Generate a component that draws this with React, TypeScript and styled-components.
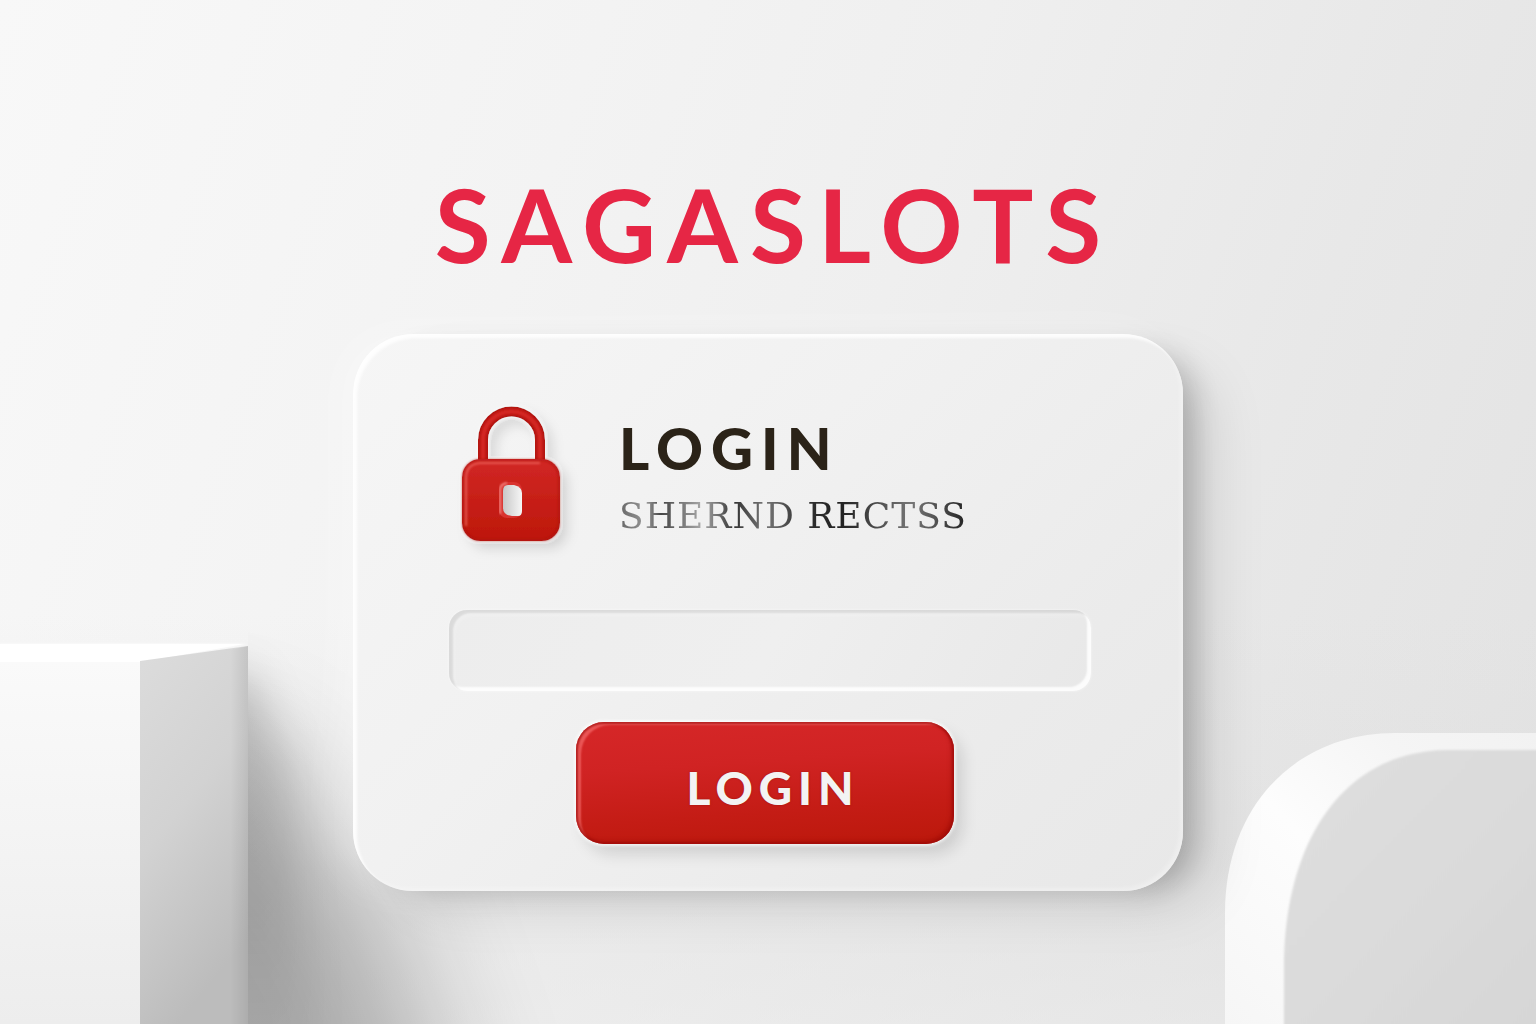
import React from "react";
import styled, { createGlobalStyle } from "styled-components";

const GlobalStyle = createGlobalStyle`
  *, *::before, *::after { box-sizing: border-box; }
  body { margin: 0; font-family: Lato, "Liberation Sans", sans-serif; }
`;

const Page = styled.div`
  position: relative;
  z-index: 0;
  min-height: 100vh;
  overflow: hidden;
  display: flex;
  flex-direction: column;
  align-items: center;
  padding: 168px 24px 132px;
  background:
    linear-gradient(180deg, rgba(255, 255, 255, 0) 60%, rgba(220, 220, 220, 0.35) 85%, rgba(232, 232, 232, 0.5) 100%),
    linear-gradient(110deg, #f8f8f8 0%, #f3f3f3 32%, #efefef 52%, #e8e8e8 75%, #e2e2e2 100%);
`;

const LeftBlock = styled.svg`
  position: absolute;
  z-index: -1;
  left: 0;
  bottom: 0;
`;

const RightBlock = styled.svg`
  position: absolute;
  z-index: -1;
  right: 0;
  bottom: 0;
`;

const Brand = styled.h1`
  margin: 0 0 54px;
  padding-left: 12px;
  font-size: 102px;
  line-height: 112px;
  font-weight: 700;
  letter-spacing: 12px;
  color: #e62645;
`;

const Card = styled.form`
  display: flex;
  flex-direction: column;
  width: 100%;
  max-width: 830px;
  padding: 72px 92px 47px 96px;
  border-radius: 60px;
  background: linear-gradient(135deg, #f6f6f6 0%, #f1f1f1 40%, #ebebeb 75%, #e8e8e8 100%);
  box-shadow:
    inset 4px 4px 3px rgba(255, 255, 255, 0.85),
    inset -3px -3px 4px rgba(255, 255, 255, 0.3),
    -14px -4px 40px rgba(255, 255, 255, 0.3),
    18px 8px 28px -10px rgba(0, 0, 0, 0.24),
    40px 24px 60px -16px rgba(0, 0, 0, 0.13);
`;

const Header = styled.header`
  display: flex;
  align-items: flex-start;
  gap: 60px;
  padding: 0 12px;
`;

const LockIcon = styled.svg`
  flex: none;
  overflow: visible;
`;

const Heading = styled.div`
  display: flex;
  flex-direction: column;
  gap: 14px;
  padding-top: 10px;
`;

const Title = styled.h2`
  margin: 0;
  font-size: 58px;
  line-height: 64px;
  font-weight: 900;
  letter-spacing: 8px;
  color: #2b2318;
`;

const Caption = styled.label`
  font-family: "DejaVu Serif", "Liberation Serif", serif;
  font-size: 36px;
  line-height: 44px;
  letter-spacing: 1px;
  color: transparent;
  background: linear-gradient(90deg, #666 0%, #999 8%, #444 12%, #aaa 24%, #333 33%, #777 42%, #333 52%, #222 64%, #444 72%, #777 84%, #222 100%);
  -webkit-background-clip: text;
  background-clip: text;
`;

const Field = styled.input`
  width: 100%;
  height: 81px;
  margin: 68px 0 31px;
  padding: 0 28px;
  border: 0;
  border-radius: 18px;
  outline: none;
  font: 400 28px/36px Lato, "Liberation Sans", sans-serif;
  color: #2b2318;
  background: linear-gradient(120deg, #ededed, #efefef 50%, #e8e8e8);
  box-shadow:
    inset 4px 3px 2px rgba(0, 0, 0, 0.09),
    inset 6px 6px 4px rgba(255, 255, 255, 0.2),
    inset -4px -4px 2px rgba(255, 255, 255, 0.85),
    0 0 3px rgba(255, 255, 255, 0.6);
`;

const Actions = styled.div`
  display: flex;
  justify-content: center;
  padding-right: 10px;
`;

const Submit = styled.button`
  width: 378px;
  max-width: 100%;
  height: 122px;
  padding: 9px 0 0 16px;
  border: 0;
  border-radius: 28px;
  font-family: inherit;
  font-size: 46px;
  line-height: 56px;
  font-weight: 900;
  letter-spacing: 6px;
  color: #f3f3f3;
  text-shadow: 0 0 2px rgba(110, 0, 0, 0.5);
  cursor: pointer;
  background: linear-gradient(176deg, #d62728 0%, #d02323 35%, #c41c15 70%, #bb180b 100%);
  box-shadow:
    inset 0 0 2px 2px rgba(160, 12, 10, 0.7),
    inset 6px 4px 2px -1px rgba(255, 130, 130, 0.55),
    inset -3px -3px 4px rgba(140, 5, 0, 0.35),
    0 0 3px 2px rgba(255, 255, 255, 0.7),
    8px 10px 16px rgba(0, 0, 0, 0.13);
`;

function Lock() {
  return (
    <LockIcon width="98" height="136" viewBox="0 0 98 136" aria-hidden="true">
      <defs>
        <linearGradient id="lockBody" x1="0" y1="0" x2="0" y2="1">
          <stop offset="0" stopColor="#d12725" />
          <stop offset="1" stopColor="#bd170a" />
        </linearGradient>
        <linearGradient id="lockHole" x1="0" y1="0" x2="1" y2="0">
          <stop offset="0" stopColor="#c8c8c8" />
          <stop offset="1" stopColor="#f6f6f6" />
        </linearGradient>
        <filter id="lockShadow" x="-30%" y="-30%" width="170%" height="170%">
          <feDropShadow dx="0" dy="0" stdDeviation="1.5" floodColor="#fff" floodOpacity="0.9" />
          <feDropShadow dx="7" dy="7" stdDeviation="6" floodColor="#000" floodOpacity="0.13" />
        </filter>
        <filter id="lockSoft"><feGaussianBlur stdDeviation="0.8" /></filter>
      </defs>
      <g filter="url(#lockShadow)">
        <path d="M22 56V34a28.500 28.500 0 0 1 57 0v22" fill="none" stroke="#b3140f" strokeWidth="10" />
        <path d="M22 56V34a28.500 28.500 0 0 1 57 0v22" fill="none" stroke="#d32623" strokeWidth="5" filter="url(#lockSoft)" />
        <rect x="1" y="53" width="98" height="82" rx="18" fill="url(#lockBody)" />
      </g>
      <rect x="2" y="54" width="96" height="80" rx="17" fill="none" stroke="#a8120c" strokeWidth="2" opacity="0.6" filter="url(#lockSoft)" />
      <path d="M5 120V72q0-14 14-15h60" fill="none" stroke="#f06a64" strokeWidth="2" opacity="0.75" filter="url(#lockSoft)" />
      <rect x="38" y="76" width="23" height="36" rx="8" fill="#d9332f" />
      <path d="M39 108V84q0-6 7-7" fill="none" stroke="#f2827e" strokeWidth="2" filter="url(#lockSoft)" />
      <path d="M47 79h6q8 2 8 8v18q0 5-4 5h-6q-9-1-9-8V85q0-6 5-6z" fill="url(#lockHole)" />
    </LockIcon>
  );
}

function LeftScenery() {
  return (
    <LeftBlock width="760" height="400" viewBox="0 0 760 400" aria-hidden="true">
      <defs>
        <linearGradient id="front" x1="0" y1="0" x2="0" y2="1">
          <stop offset="0" stopColor="#fafafa" />
          <stop offset="1" stopColor="#ededed" />
        </linearGradient>
        <linearGradient id="side" x1="0" y1="0" x2="0.35" y2="1">
          <stop offset="0" stopColor="#dcdcdc" />
          <stop offset="0.5" stopColor="#d2d2d2" />
          <stop offset="1" stopColor="#bcbcbc" />
        </linearGradient>
        <linearGradient id="sideEdge" x1="0" y1="0" x2="1" y2="0">
          <stop offset="0" stopColor="#000" stopOpacity="0" />
          <stop offset="1" stopColor="#000" stopOpacity="0.08" />
        </linearGradient>
        <linearGradient id="castNear" x1="0" y1="0" x2="0" y2="1">
          <stop offset="0" stopColor="#000" stopOpacity="0.2" />
          <stop offset="0.4" stopColor="#000" stopOpacity="0.09" />
          <stop offset="1" stopColor="#000" stopOpacity="0" />
        </linearGradient>
        <filter id="castNearBlur" x="-60%" y="-40%" width="220%" height="180%">
          <feGaussianBlur stdDeviation="20" />
        </filter>
        <filter id="castFarBlur" x="-60%" y="-60%" width="220%" height="220%">
          <feGaussianBlur stdDeviation="66" />
        </filter>
        <filter id="edgeBlur"><feGaussianBlur stdDeviation="1.2" /></filter>
        <clipPath id="castClip"><rect x="248" y="0" width="512" height="400" /></clipPath>
      </defs>
      <g clipPath="url(#castClip)">
        <path d="M150 50L250 50L290 140L320 520H150z" fill="url(#castNear)" filter="url(#castNearBlur)" />
        <path d="M60 130L250 130L380 290L470 560H60z" fill="#000" opacity="0.28" filter="url(#castFarBlur)" />
      </g>
      <path d="M0 20H248L141 37V44H0z" fill="#fff" filter="url(#edgeBlur)" />
      <path d="M0 37H141V400H0z" fill="url(#front)" />
      <path d="M0 20H244L141 38H0z" fill="#fff" />
      <path d="M140 37L248 22V400H140z" fill="url(#side)" />
      <path d="M230 26L248 22V400H230z" fill="url(#sideEdge)" />
      <path d="M141 38V400" stroke="#c4c4c4" strokeWidth="3" opacity="0.7" filter="url(#edgeBlur)" />
    </LeftBlock>
  );
}

function RightScenery() {
  return (
    <RightBlock width="311" height="291" viewBox="0 0 311 291" aria-hidden="true">
      <defs>
        <linearGradient id="rim" x1="0" y1="1" x2="1" y2="0">
          <stop offset="0" stopColor="#f6f6f6" />
          <stop offset="0.45" stopColor="#fdfdfd" />
          <stop offset="0.75" stopColor="#f5f5f5" />
          <stop offset="1" stopColor="#f2f2f2" />
        </linearGradient>
        <linearGradient id="face" x1="0" y1="0" x2="1" y2="1">
          <stop offset="0" stopColor="#dfdfdf" />
          <stop offset="1" stopColor="#d6d6d6" />
        </linearGradient>
        <filter id="faceBlur"><feGaussianBlur stdDeviation="1" /></filter>
      </defs>
      <path d="M0 291V180C0 72 72 0 170 0H311V291z" fill="url(#rim)" />
      <path d="M59 300V225C62 105 120 18 222 17H330V300z" fill="url(#face)" filter="url(#faceBlur)" />
    </RightBlock>
  );
}

export default function App() {
  return (
    <>
      <GlobalStyle />
      <Page>
        <LeftScenery />
        <RightScenery />
        <Brand>SAGASLOTS</Brand>
        <Card onSubmit={(event: React.FormEvent) => event.preventDefault()}>
          <Header>
            <Lock />
            <Heading>
              <Title>LOGIN</Title>
              <Caption htmlFor="account">SHERND RECTSS</Caption>
            </Heading>
          </Header>
          <Field id="account" type="text" />
          <Actions>
            <Submit type="submit">LOGIN</Submit>
          </Actions>
        </Card>
      </Page>
    </>
  );
}
